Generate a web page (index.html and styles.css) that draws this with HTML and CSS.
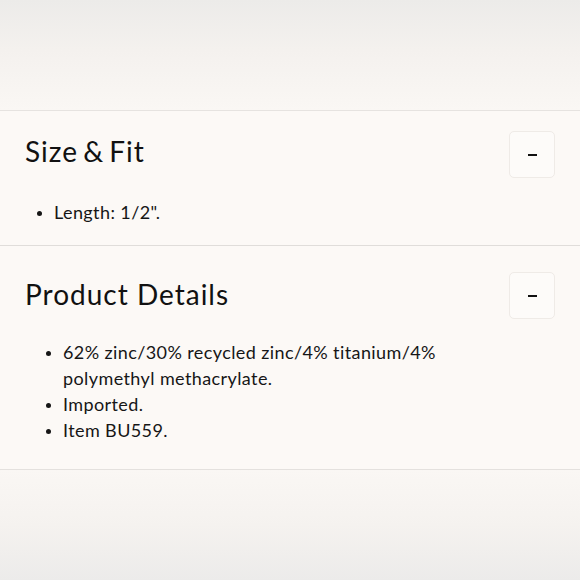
FILE: index.html
```html
<!DOCTYPE html>
<html lang="en">
<head>
<meta charset="utf-8">
<title>Product info</title>
<link rel="stylesheet" href="styles.css">
</head>
<body>
<div class="page">
  <div class="fade fade-top"></div>
  <section class="panel panel-fit">
    <div class="panel-head">
      <h2 class="panel-title">Size &amp; Fit</h2>
      <button class="toggle" type="button" aria-label="Collapse"><span class="dash"></span></button>
    </div>
    <ul class="panel-list list-fit">
      <li>Length: 1/2".</li>
    </ul>
  </section>
  <section class="panel panel-details">
    <div class="panel-head">
      <h2 class="panel-title">Product Details</h2>
      <button class="toggle" type="button" aria-label="Collapse"><span class="dash"></span></button>
    </div>
    <ul class="panel-list list-details">
      <li>62% zinc/30% recycled zinc/4% titanium/4% polymethyl methacrylate.</li>
      <li>Imported.</li>
      <li>Item BU559.</li>
    </ul>
  </section>
  <div class="fade fade-bottom"></div>
</div>
</body>
</html>
```

FILE: styles.css
```css
html, body {
  margin: 0;
  padding: 0;
}
body {
  width: 580px;
  height: 580px;
  overflow: hidden;
  background: #f3f1ee;
  font-family: Lato, "Noto Sans", sans-serif;
  color: #141414;
}
.page {
  display: flex;
  flex-direction: column;
  height: 580px;
}
.fade {
  flex: none;
}
.fade-top {
  height: 110px;
  background: linear-gradient(to bottom, #ecebe9 0%, #f4f1ee 45%, #faf7f4 100%);
}
.fade-bottom {
  flex: 1;
  background: linear-gradient(to bottom, #faf7f4 0%, #f5f2ef 50%, #ecebea 100%);
  border-top: 1px solid #e4e1de;
}
.panel {
  background: #fcf9f6;
  border-top: 1px solid #e6e3e0;
  padding: 0 25px;
}
.panel-details {
  border-top-color: #e0ddda;
}
.panel-head {
  display: flex;
  justify-content: space-between;
  align-items: flex-start;
}
.panel-title {
  margin: 0;
  font-weight: 400;
  font-size: 28px;
  line-height: 34px;
  letter-spacing: 1px;
  color: #111;
}
.panel-fit .panel-title {
  margin-top: 3px;
  word-spacing: -3px;
}
.toggle {
  width: 46px;
  height: 47px;
  padding: 0;
  margin: 0;
  border: 1.5px solid #efebe7;
  border-radius: 5px;
  background: #fdfbf9;
  display: flex;
  align-items: center;
  justify-content: center;
}
.dash {
  display: block;
  width: 9px;
  height: 2px;
  background: #111;
}
.panel-fit .panel-head {
  padding-top: 20px;
}
.panel-details .panel-head {
  padding-top: 26px;
}
.panel-details .panel-title {
  margin-top: 5px;
}
.panel-list {
  margin: 0;
  list-style: disc;
  font-size: 18px;
  line-height: 26px;
  letter-spacing: 0.4px;
  color: #161616;
}
.list-fit {
  padding: 21px 0 20px 29px;
}
.list-details {
  padding: 20px 90px 26px 38px;
}
.panel-list li::marker {
  font-size: 15px;
}
```
